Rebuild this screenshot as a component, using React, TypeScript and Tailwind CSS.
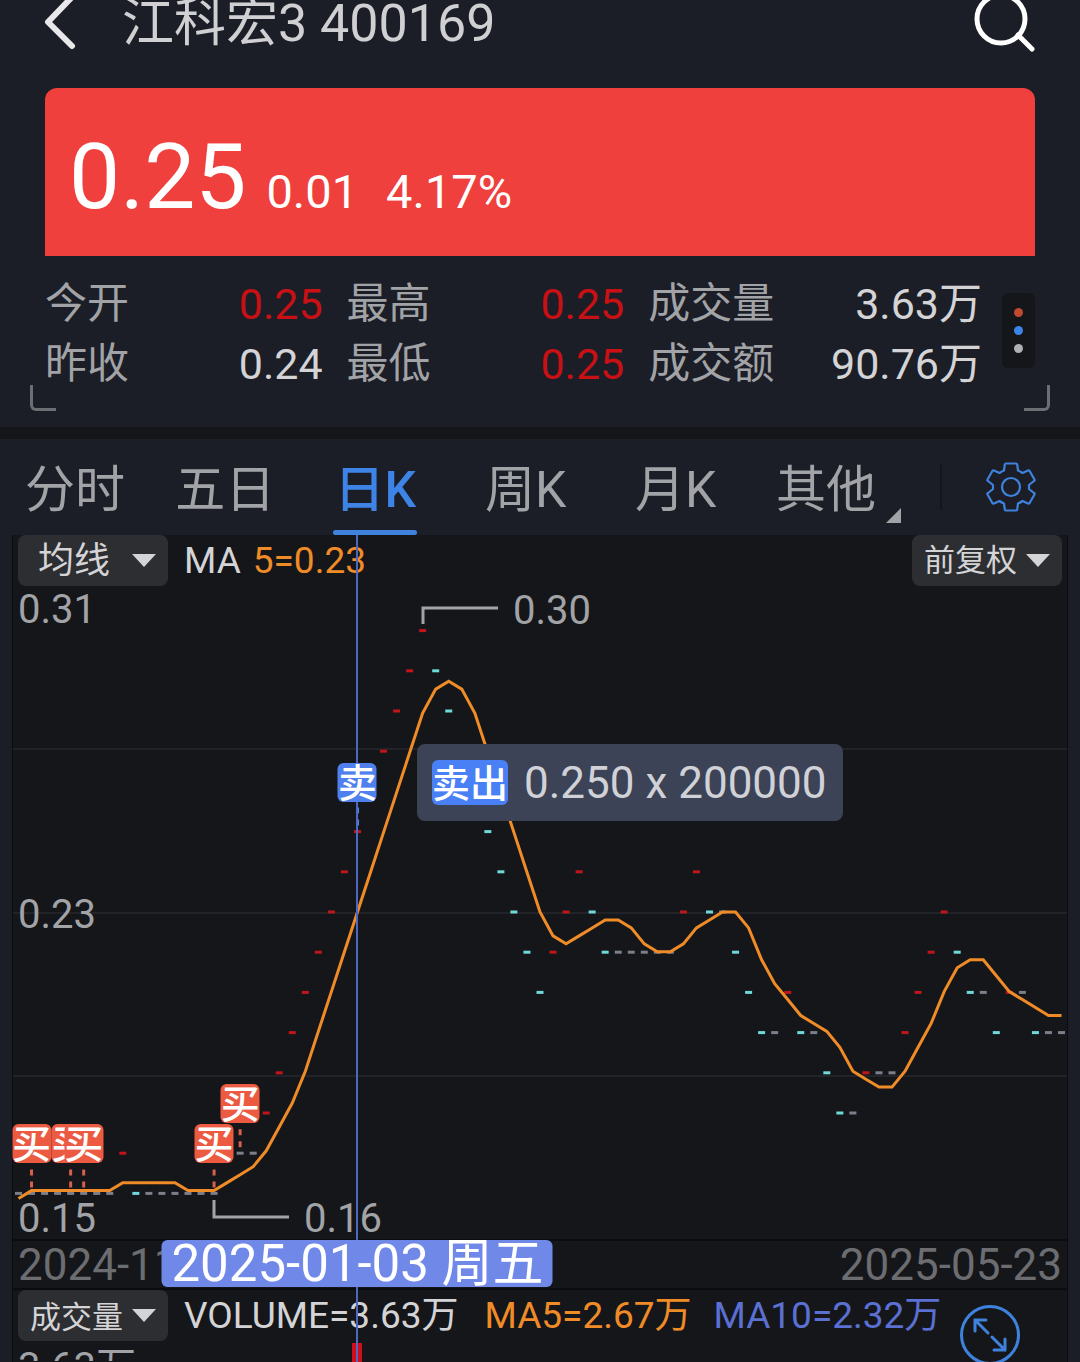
import React from "react";

// closing prices in cents, one per trading day
const closes = [
  16, 16, 16, 16, 16, 16, 16, 16, 17, 16, 16, 16, 16, 16, 16, 16, 17, 17, 17,
  18, 19, 20, 21, 22, 23, 24, 25, 26, 27, 28, 29, 30, 29, 28, 27, 26, 25, 24,
  23, 22, 21, 22, 23, 24, 23, 22, 22, 22, 22, 22, 22, 23, 24, 23, 23, 22, 21,
  20, 20, 21, 20, 20, 19, 18, 18, 19, 19, 19, 20, 21, 22, 23, 22, 21, 21, 20,
  21, 21, 20, 20, 20,
];
// the days before the first visible one, needed for MA5
const before = [15, 16, 16, 16];

const W = 1054;
const H = 704;
const SELECTED = 26;

const dayX = (i: number) => 5.5 + (i * 1043) / 80;
const priceY = (p: number) => 377 - (p - 23) * 40.2;
const maY = (p: number) => 377 - (p - 23) * 39.8;
const percent = (x: number) => `${(x / W) * 100}%`;

const all = [...before, ...closes];
const maPoints = closes
  .map((_, i) => {
    const sum = all.slice(i, i + 5).reduce((a, b) => a + b, 0);
    return `${dayX(i)},${maY(sum / 5)}`;
  })
  .join(" ");

const tickColor = (i: number) => {
  const prev = i === 0 ? 16 : closes[i - 1];
  if (closes[i] > prev) return "#c0161b";
  if (closes[i] < prev) return "#6fd9d9";
  return "#7c7f8a";
};

const trades = [
  { day: 1, type: "买" },
  { day: 4, type: "买" },
  { day: 5, type: "买" },
  { day: 15, type: "买" },
  { day: 17, type: "买" },
  { day: SELECTED, type: "卖" },
];

const tabs = ["分时", "五日", "日K", "周K", "月K", "其他"];

const Header = () => (
  <header className="flex h-[88px] items-start justify-between px-11">
    <div className="flex items-start gap-[46px]">
      <button aria-label="返回" className="h-[50px] w-8">
        <svg viewBox="0 0 32 50" className="h-[50px] w-8" fill="none">
          <path
            d="M29 -4L4 22L28 46"
            stroke="#e8e8ea"
            strokeWidth="6"
            strokeLinecap="round"
            strokeLinejoin="round"
          />
        </svg>
      </button>
      <h1 className="text-[52px] leading-12 text-[#d0d0d2]">江科宏3 400169</h1>
    </div>
    <button aria-label="搜索" className="h-14 w-16">
      <svg viewBox="0 0 64 56" className="h-14 w-16" fill="none">
        <circle cx="29" cy="19" r="24" stroke="#fff" strokeWidth="5" />
        <path
          d="M46 35L60 49"
          stroke="#fff"
          strokeWidth="5"
          strokeLinecap="round"
        />
      </svg>
    </button>
  </header>
);

type StatProps = { label: string; value: string; red?: boolean };

const Stat = ({ label, value, red }: StatProps) => (
  <div className="flex h-15 items-center justify-between whitespace-nowrap">
    <dt className="text-[42px] leading-15 text-[#a2a3a7]">{label}</dt>
    <dd
      className={
        red
          ? "text-[43px] leading-15 text-[#c81015]"
          : "text-[43px] leading-15 text-[#d4d4d6]"
      }
    >
      {value}
    </dd>
  </div>
);

const Quote = () => (
  <section className="relative px-[45px] pb-[33px]">
    <div className="flex h-[168px] items-baseline rounded-t-xl bg-[#ef403d] px-6 text-white">
      <span className="text-[91px] leading-[178px]">0.25</span>
      <span className="ml-5 text-[47px]">0.01</span>
      <span className="ml-7 text-[47px]">4.17%</span>
    </div>
    <div className="flex items-center gap-5 pt-[18px]">
      <dl className="grid flex-1 grid-cols-[277fr_277fr_333fr] gap-x-6">
        <Stat label="今开" value="0.25" red />
        <Stat label="最高" value="0.25" red />
        <Stat label="成交量" value="3.63万" />
        <Stat label="昨收" value="0.24" />
        <Stat label="最低" value="0.25" red />
        <Stat label="成交额" value="90.76万" />
      </dl>
      <button
        aria-label="更多"
        className="mb-2 flex h-[75px] w-[33px] flex-col items-center justify-center gap-[9px] rounded-md bg-[#15161a]"
      >
        <i className="size-[9px] rounded-full bg-[#c0492f]" />
        <i className="size-[9px] rounded-full bg-[#3d84ea]" />
        <i className="size-[9px] rounded-full bg-[#b0b0b4]" />
      </button>
    </div>
    <div className="absolute bottom-4 left-[30px] size-[26px] rounded-bl-md border-b-[3px] border-l-[3px] border-[#6c6e74]" />
    <div className="absolute bottom-4 right-[30px] size-[26px] rounded-br-md border-b-[3px] border-r-[3px] border-[#6c6e74]" />
  </section>
);

const Gear = () => (
  <svg viewBox="0 0 50 50" className="size-[50px]" fill="none">
    <path
      d="M20 1.500H30Q31 1.500 31.200 2.500L32 8.500Q34.500 9.500 36.500 11L42 8.500Q43 8.200 43.600 9L48.500 17.500Q49 18.500 48 19L43 23V27L48 31Q49 31.600 48.500 32.500L43.600 41Q43 41.800 42 41.500L36.500 39Q34.500 40.500 32 41.500L31.200 47.500Q31 48.500 30 48.500H20Q19 48.500 18.800 47.500L18 41.500Q15.500 40.500 13.500 39L8 41.500Q7 41.800 6.400 41L1.500 32.500Q1 31.600 2 31L7 27V23L2 19Q1 18.500 1.500 17.500L6.400 9Q7 8.200 8 8.500L13.500 11Q15.500 9.500 18 8.500L18.800 2.500Q19 1.500 20 1.500Z"
      stroke="#3f82de"
      strokeWidth="2.200"
      strokeLinejoin="round"
    />
    <circle cx="25" cy="25" r="9" stroke="#3f82de" strokeWidth="2.200" />
  </svg>
);

const Tabs = () => (
  <nav className="flex h-24">
    <div className="grid flex-1 grid-cols-6">
      {tabs.map((tab) => (
        <button
          key={tab}
          className={
            tab === "日K"
              ? "relative pt-1.5 text-[50px] font-medium leading-[90px] text-[#3d84e6]"
              : "relative pt-1.5 text-[50px] leading-[90px] text-[#a2a3a7]"
          }
        >
          {tab}
          {tab === "日K" && (
            <span className="absolute bottom-0 left-1/2 h-[5px] w-[84px] -translate-x-1/2 rounded-sm bg-[#3f82de]" />
          )}
          {tab === "其他" && (
            <svg
              viewBox="0 0 15 15"
              className="absolute bottom-3 right-0 size-[15px]"
            >
              <path d="M15 0V15H0Z" fill="#a2a3a7" />
            </svg>
          )}
        </button>
      ))}
    </div>
    <div className="flex w-[179px] items-center pl-[39px]">
      <div className="h-[46px] w-0.5 bg-[#15161a]" />
      <button aria-label="设置" className="ml-11">
        <Gear />
      </button>
    </div>
  </nav>
);

type PickerProps = { label: string; options: string[]; wide?: boolean };

const Picker = ({ label, options, wide }: PickerProps) => (
  <label className="relative block h-[51px] w-[150px] rounded-lg bg-[#2d2e32] text-[#d4d4d6]">
    <span className="sr-only">{label}</span>
    <select
      className={
        wide
          ? "h-full w-full appearance-none pl-3 text-[31px] leading-[50px]"
          : "h-full w-full appearance-none pl-5 text-[36px] leading-[50px]"
      }
    >
      {options.map((o) => (
        <option key={o}>{o}</option>
      ))}
    </select>
    <svg
      viewBox="0 0 24 13"
      className="pointer-events-none absolute right-3 top-[19px] h-[13px] w-6"
    >
      <path d="M0 0H24L12 13Z" fill="#d4d4d6" />
    </svg>
  </label>
);

const Chart = () => (
  <div className="relative h-[704px]">
    <svg
      viewBox={`0 0 ${W} ${H}`}
      preserveAspectRatio="none"
      className="absolute inset-0 h-full w-full"
      fill="none"
    >
      {[214, 378, 541].map((y) => (
        <path key={y} d={`M0 ${y}H${W}`} stroke="#222328" strokeWidth="2" />
      ))}
      {closes.map((p, i) => (
        <rect
          key={i}
          x={dayX(i) - 3.5}
          y={priceY(p) - 1.5}
          width="7"
          height="3"
          fill={tickColor(i)}
        />
      ))}
      <polyline points={maPoints} stroke="#f08c28" strokeWidth="3" />
      {trades.map(({ day, type }) => (
        <path
          key={day}
          d={`M${dayX(day)} ${priceY(closes[day]) - 24}v18`}
          stroke={type === "买" ? "#d5604d" : "#5b86e6"}
          strokeWidth="3"
          strokeDasharray="6 6"
        />
      ))}
      <path d="M410 89V73H485" stroke="#a2a3a7" strokeWidth="3" />
      <path d="M201 665V682H276" stroke="#a2a3a7" strokeWidth="3" />
    </svg>

    <div className="relative flex h-[51px] items-center justify-between px-[5px] leading-[51px]">
      <div className="flex items-center">
        <Picker label="指标" options={["均线", "BOLL"]} />
        <span className="ml-4 text-[37px] text-[#d4d4d6]">MA</span>
        <span className="ml-3 text-[37px] text-[#f08c28]">5=0.23</span>
      </div>
      <Picker label="复权" options={["前复权", "后复权", "不复权"]} wide />
    </div>

    <div className="text-[40px] leading-12 text-[#a2a3a7]">
      <span className="absolute left-[5px] top-[51px]">0.31</span>
      <span className="absolute left-[5px] top-[356px]">0.23</span>
      <span className="absolute left-[5px] top-[660px]">0.15</span>
      <span className="absolute top-[52px]" style={{ left: percent(500) }}>
        0.30
      </span>
      <span className="absolute top-[660px]" style={{ left: percent(291) }}>
        0.16
      </span>
    </div>
  </div>
);

const Markers = () => (
  <>
    {trades.map(({ day, type }) => (
      <span
        key={day}
        className={
          type === "买"
            ? "absolute size-[39px] -translate-x-1/2 rounded-md bg-[#ec5a42] text-center text-[39px] font-medium leading-[42px] text-white"
            : "absolute size-[39px] -translate-x-1/2 rounded-md bg-[#4f80ee] text-center text-[39px] font-medium leading-[42px] text-white"
        }
        style={{
          left: percent(dayX(day)),
          top: Math.round(priceY(closes[day]) - 69),
        }}
      >
        {type}
      </span>
    ))}
    <div className="absolute left-[404px] top-[209px] flex h-[77px] items-center gap-4 whitespace-nowrap rounded-lg bg-[#3d4356] pl-[15px] pr-4 text-[44px] text-[#d0d2d8]">
      <span className="h-[45px] rounded-md bg-[#4a80f5] text-[38px] font-medium leading-[48px] text-white">
        卖出
      </span>
      0.250 x 200000
    </div>
  </>
);

const App = () => {
  return (
    <div className="flex h-screen flex-col overflow-hidden bg-[#1b1e26] font-[family-name:Roboto,'Noto_Sans_CJK_SC',sans-serif]">
      <Header />
      <Quote />
      <div className="h-3 shrink-0 bg-[#15161a]" />
      <Tabs />
      <main className="relative mx-3 flex flex-1 flex-col border-x border-[#0b0c10] bg-[#15161a]">
        <Chart />
        <div className="relative flex h-[51px] items-center justify-between border-y-2 border-[#0b0c10] px-[5px] text-[44px] text-[#6c6d71]">
          <time>2024-11</time>
          <time>2025-05-23</time>
        </div>
        <div className="flex items-center whitespace-nowrap px-[5px] text-[37px] leading-[51px]">
          <Picker label="副图" options={["成交量", "MACD"]} wide />
          <span className="ml-4 text-[#d4d4d6]">VOLUME=3.63万</span>
          <span className="ml-[26px] text-[#f08c28]">MA5=2.67万</span>
          <span className="ml-[22px] text-[#5a70d2]">MA10=2.32万</span>
        </div>
        <div className="h-5 overflow-hidden px-[5px] text-[40px] leading-[54px] text-[#a2a3a7]">
          3.63万
        </div>

        <div
          className="absolute bottom-0 h-[19px] w-2.5 -translate-x-1/2 bg-[#d00d18]"
          style={{ left: percent(dayX(SELECTED)) }}
        />
        <div
          className="absolute inset-y-0 w-0.5 -translate-x-1/2 bg-[#4c68c4]"
          style={{ left: percent(dayX(SELECTED)) }}
        />
        <Markers />
        <time
          className="absolute top-[705px] h-[47px] w-[391px] -translate-x-1/2 whitespace-nowrap rounded-md bg-[#7089e8] text-center text-[51px] leading-[48px] text-white"
          style={{ left: percent(dayX(SELECTED)) }}
        >
          2025-01-03 周五
        </time>
        <button
          aria-label="全屏"
          className="absolute right-[47px] top-[770px] size-[60px]"
        >
          <svg viewBox="0 0 60 60" className="size-[60px]" fill="none">
            <circle cx="30" cy="30" r="28.500" stroke="#3f82de" strokeWidth="3" />
            <path
              d="M28 28L15 15M15 26V15H26M32 32L45 45M45 34V45H34"
              stroke="#3f82de"
              strokeWidth="3"
              strokeLinecap="round"
            />
          </svg>
        </button>
      </main>
    </div>
  );
};

export default App;
